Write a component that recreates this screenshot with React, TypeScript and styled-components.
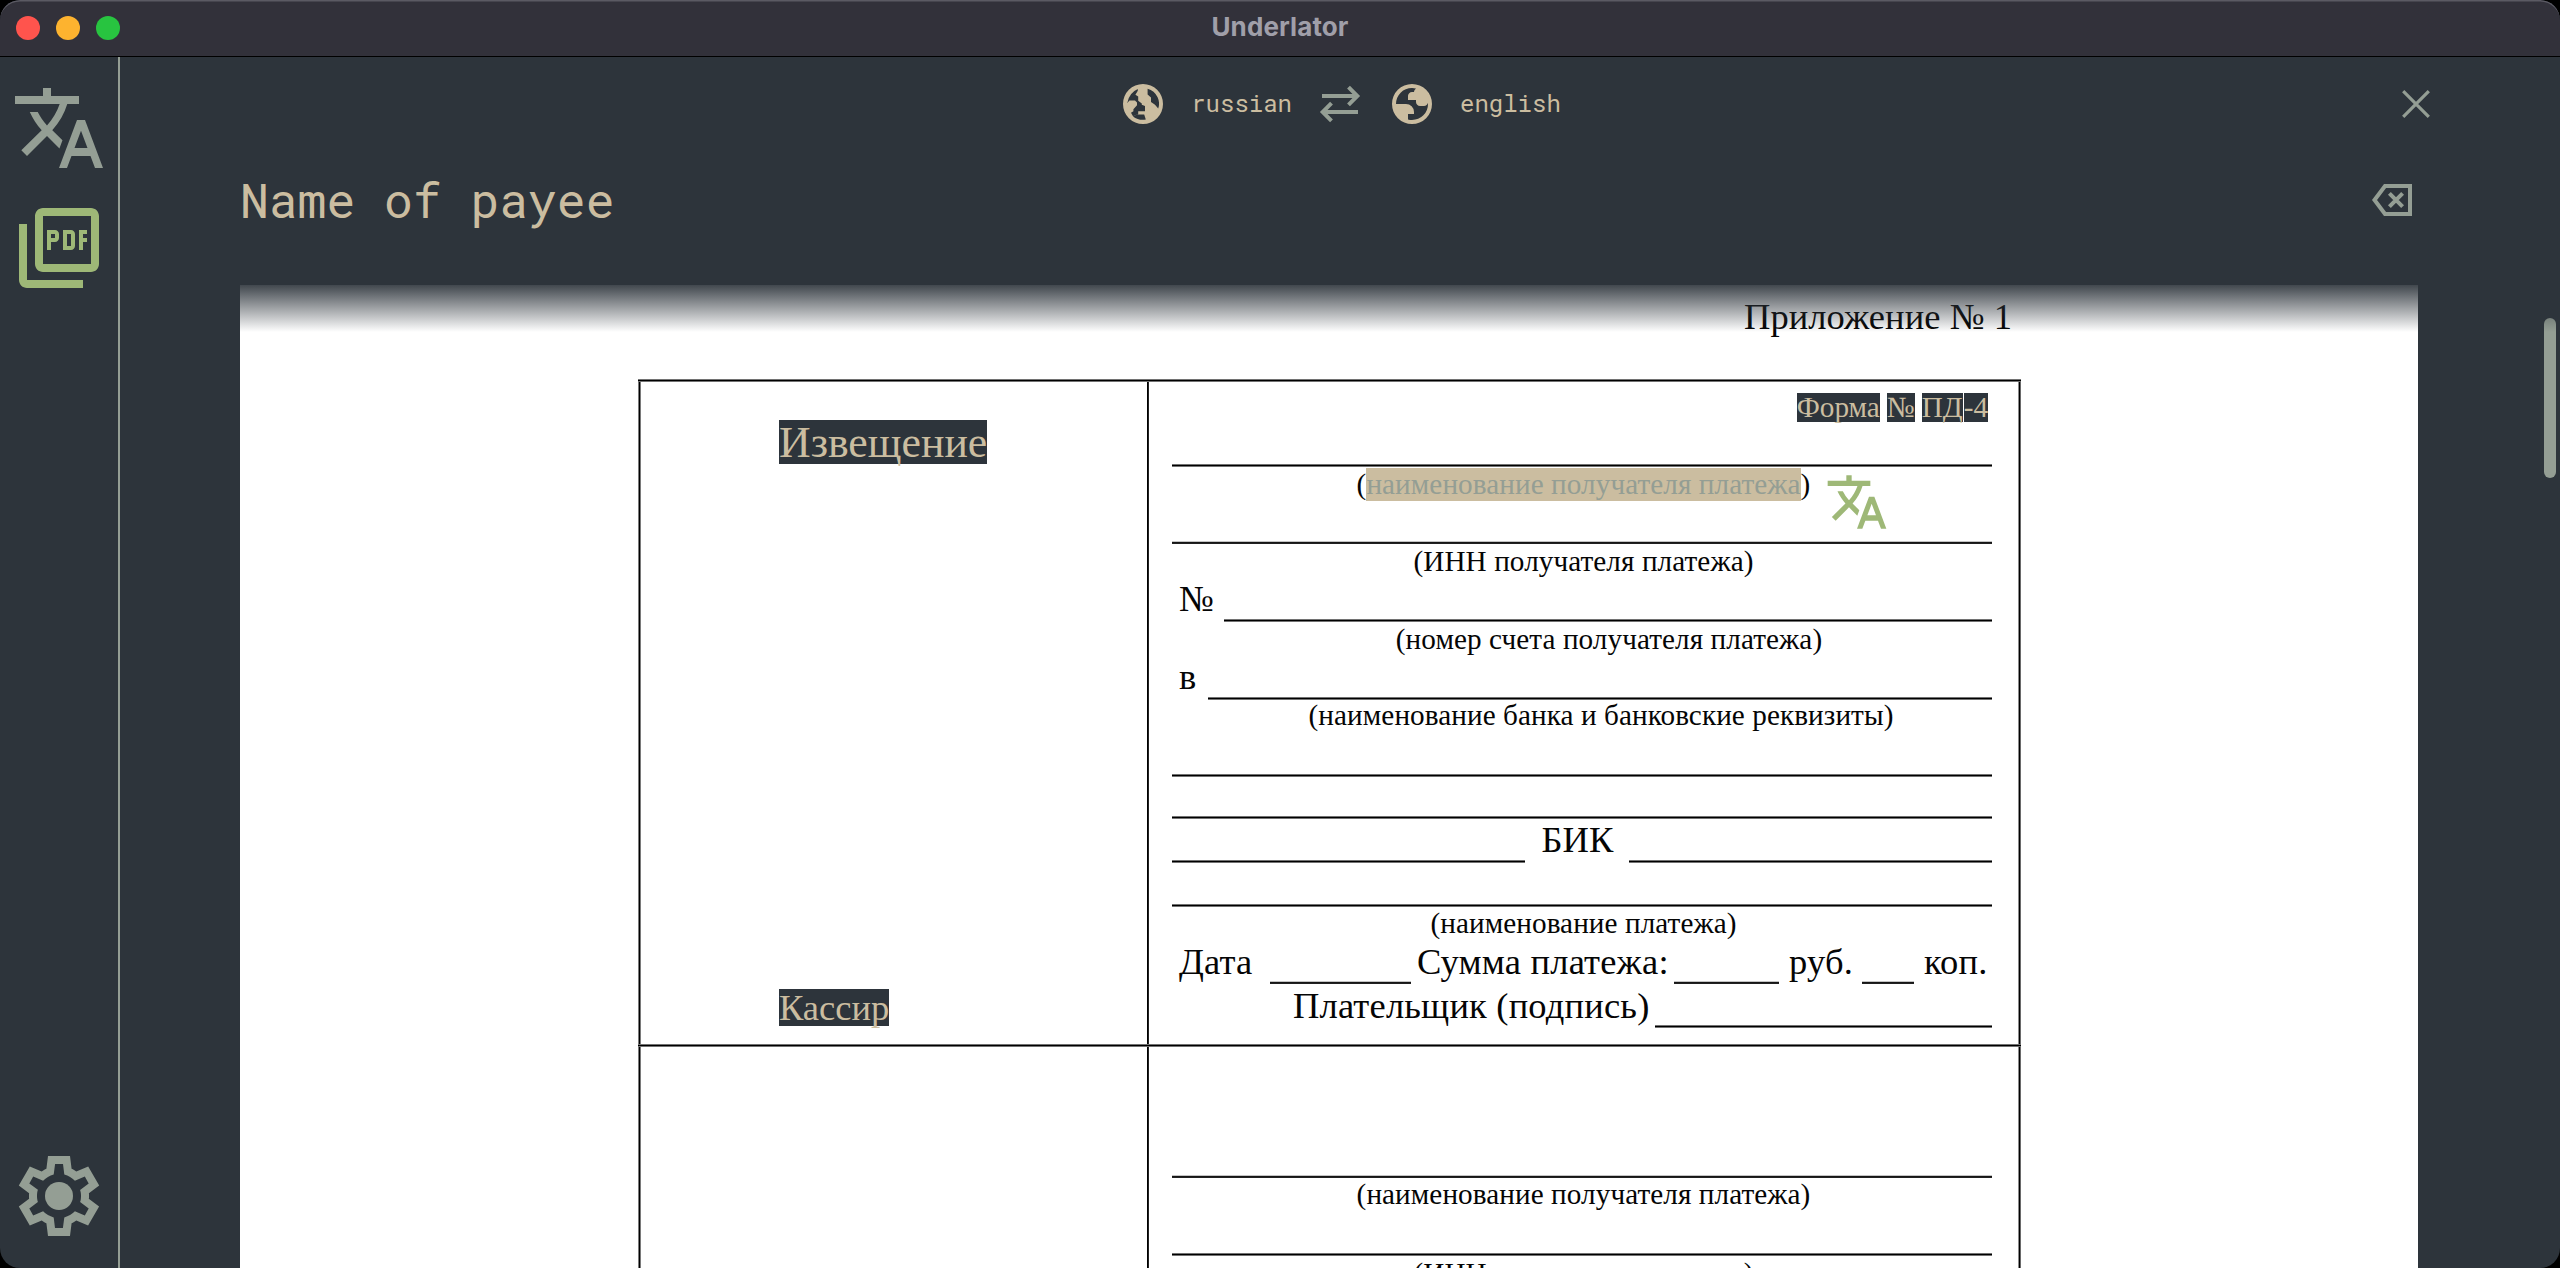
import React from "react";
import styled, { createGlobalStyle, css } from "styled-components";

const color = {
  bg: "#2d343b",
  title: "#32313a",
  cream: "#cbbda0",
  sage: "#949e94",
  green: "#9eb877",
  ink: "#050505",
};

const mono = '"Roboto Mono", "DejaVu Sans Mono", "Liberation Mono", monospace';
const serif = '"Liberation Serif", "Times New Roman", serif';

const GlobalStyle = createGlobalStyle`
  * { box-sizing: border-box; }
  html, body { margin: 0; padding: 0; background: #000; overflow: hidden; }
`;

const Window = styled.div`
  width: 2560px;
  height: 1268px;
  display: flex;
  flex-direction: column;
  overflow: hidden;
  border-radius: 20px;
  background: ${color.bg};
`;

const TitleBar = styled.header`
  position: relative;
  flex: none;
  height: 57px;
  display: flex;
  align-items: center;
  justify-content: center;
  background: ${color.title};
  border-bottom: 1px solid #000;
  border-radius: 20px 20px 0 0;
  box-shadow: inset 0 2px 0 -0.5px #5b5a63;
`;

const Lights = styled.div`
  position: absolute;
  left: 16px;
  top: 16px;
  display: flex;
  gap: 16px;
`;

const Light = styled.span<{ $tone: string }>`
  width: 24px;
  height: 24px;
  border-radius: 50%;
  background: ${(p) => p.$tone};
`;

const Title = styled.h1`
  margin: 0;
  padding-bottom: 2px;
  font: 700 26px/32px Inter, "Liberation Sans", sans-serif;
  letter-spacing: 0.1px;
  color: #a09fa9;
`;

const Body = styled.div`
  flex: 1;
  min-height: 0;
  display: flex;
`;

const Sidebar = styled.nav`
  flex: none;
  width: 120px;
  padding: 23px 0 24px;
  display: flex;
  flex-direction: column;
  align-items: center;
  gap: 24px;
  border-right: 2px solid ${color.sage};
`;

const NavButton = styled.button<{ $active?: boolean; $last?: boolean }>`
  width: 96px;
  height: 96px;
  padding: 0;
  border: 0;
  background: none;
  display: flex;
  color: ${(p) => (p.$active ? color.green : color.sage)};
  ${(p) => p.$last && css`margin-top: auto;`}
`;

const Icon = styled.svg<{ $size: number }>`
  display: block;
  flex: none;
  width: ${(p) => p.$size}px;
  height: ${(p) => p.$size}px;
  fill: currentColor;
`;

const Main = styled.main`
  position: relative;
  flex: 1;
  min-width: 0;
  display: flex;
  flex-direction: column;
`;

const LanguageBar = styled.div`
  flex: none;
  height: 94px;
  display: grid;
  grid-template-columns: 1fr auto 1fr;
  align-items: center;
`;

const Languages = styled.div`
  grid-column: 2;
  display: flex;
  align-items: center;
  gap: 24px;
  color: ${color.cream};
`;

const Language = styled.span`
  padding-bottom: 2px;
  font: 400 24px/46px ${mono};
`;

const IconButton = styled.button<{ $end?: number }>`
  padding: 0;
  border: 0;
  background: none;
  color: ${color.sage};
  ${(p) => p.$end !== undefined && css`justify-self: end; margin-right: ${p.$end}px;`}
`;

const Translation = styled.div`
  flex: none;
  height: 134px;
  padding: 25px 144px 0 120px;
  display: flex;
  justify-content: space-between;
  align-items: flex-start;
`;

const Phrase = styled.p`
  margin: 0;
  font: 400 48px/47px ${mono};
  color: ${color.cream};
`;

const Viewer = styled.section`
  flex: 1;
  min-height: 0;
  display: flex;
  justify-content: space-between;
  padding: 0 4px 0 120px;
`;

const Page = styled.article`
  width: 2178px;
  overflow: hidden;
  background: #fff;
  color: ${color.ink};
  font-family: ${serif};
  font-size: 36.5px;
`;

const Fade = styled.div`
  position: absolute;
  left: 0;
  right: 0;
  top: 223px;
  height: 52px;
  background: linear-gradient(${color.bg}, rgba(45, 48, 50, 0));
  z-index: 2;
`;

const ScrollThumb = styled.div`
  flex: none;
  width: 12px;
  height: 160px;
  margin-top: 33px;
  border-radius: 6px;
  background: ${color.sage};
`;

const Appendix = styled.div`
  height: 94px;
  line-height: 64px;
  padding-right: 406px;
  text-align: right;
  letter-spacing: 0.05px;
`;

const FormTable = styled.div`
  width: 1383px;
  margin-left: 398px;
`;

const Rule = styled.div<{ $w?: number; $low?: boolean }>`
  height: 3px;
  flex: ${(p) => (p.$w ? `0 0 ${p.$w}px` : "1 0 auto")};
  align-self: ${(p) => (p.$w ? "flex-end" : "auto")};
  background: ${(p) =>
    p.$low
      ? "linear-gradient(#c4c4c4 1px, #161616 1px 2px, #222 2px)"
      : "linear-gradient(#727272 1px, #000 1px 2px, #727272 2px)"};
`;

const FullRule = styled(Rule)`
  flex: none;
`;

const Side = styled.div<{ $kind: "left" | "mid" | "right" }>`
  flex: none;
  width: ${(p) => (p.$kind === "mid" ? 2 : 3)}px;
  background: ${(p) =>
    ({
      left: "linear-gradient(90deg, #7a7a7a 1px, #000 1px 2px, #7a7a7a 2px)",
      mid: "linear-gradient(90deg, #000 1px, #222 1px)",
      right: "linear-gradient(90deg, #8a8a8a 1px, #000 1px 2px, #6a6a6a 2px)",
    })[p.$kind]};
`;

const TableRow = styled.div<{ $h: number }>`
  display: flex;
  height: ${(p) => p.$h}px;
`;

const StubCell = styled.div`
  width: 506px;
  padding: 38px 0 18px 138px;
  display: flex;
  flex-direction: column;
  justify-content: space-between;
  align-items: flex-start;
`;

const FieldCell = styled.div`
  width: 869px;
  padding: 0 26px 0 23px;
  display: flex;
  flex-direction: column;
`;

const Mark = styled.span<{ $size: number; $lh: number }>`
  background: ${color.bg};
  color: ${color.cream};
  font-size: ${(p) => p.$size}px;
  line-height: ${(p) => p.$lh}px;
  white-space: nowrap;
`;

const FormTag = styled.div`
  height: 82px;
  padding: 11px 4px 0 0;
  display: flex;
  justify-content: flex-end;
  align-items: flex-start;
`;

const TagSpace = styled.span<{ $w: number }>`
  width: ${(p) => p.$w}px;
`;

const Caption = styled.div<{ $lh: number; $after?: number; $indent?: number }>`
  position: relative;
  flex: none;
  display: flex;
  justify-content: center;
  padding-left: ${(p) => p.$indent ?? 3}px;
  font-size: 29.2px;
  letter-spacing: 0.08px;
  line-height: ${(p) => p.$lh}px;
  margin-bottom: ${(p) => p.$after ?? 0}px;
  white-space: nowrap;
`;

const Selected = styled.span`
  background: ${color.cream};
  color: ${color.sage};
  height: 33px;
  margin-top: 1px;
  line-height: 32px;
`;

const FloatingTranslate = styled.button`
  position: absolute;
  left: 653px;
  top: 3px;
  padding: 0;
  border: 0;
  background: none;
  color: ${color.green};
`;

const Line = styled.div<{ $h: number }>`
  flex: none;
  height: ${(p) => p.$h}px;
  display: flex;
`;

const Label = styled.span<{ $w: number; $pad?: number; $lh: number; $center?: boolean }>`
  flex: none;
  width: ${(p) => p.$w}px;
  padding-left: ${(p) => p.$pad ?? 0}px;
  line-height: ${(p) => p.$lh}px;
  letter-spacing: 0.18px;
  text-align: ${(p) => (p.$center ? "center" : "left")};
  white-space: nowrap;
`;

const Gap = styled.div<{ $h: number }>`
  flex: none;
  height: ${(p) => p.$h}px;
`;

const TranslateIcon = ({ size }: { size: number }) => (
  <Icon $size={size} viewBox="0 0 24 24">
    <path d="M12.87 15.07l-2.54-2.51.03-.03c1.74-1.94 2.98-4.17 3.71-6.53H17V4h-7V2H8v2H1v1.99h11.17C11.5 7.92 10.44 9.75 9 11.35 8.07 10.32 7.3 9.19 6.69 8h-2c.73 1.63 1.73 3.17 2.98 4.56l-5.09 5.02L4 19l5-5 3.11 3.11.76-2.04zM18.5 10h-2L12 22h2l1.12-3h4.75L21 22h2l-4.5-12zm-2.62 7l1.62-4.33L19.12 17h-3.24z" />
  </Icon>
);

const PdfIcon = () => (
  <Icon $size={96} viewBox="0 0 24 24">
    <path d="M20 2H8c-1.1 0-2 .9-2 2v12c0 1.1.9 2 2 2h12c1.1 0 2-.9 2-2V4c0-1.1-.9-2-2-2zm0 14H8V4h12v12zM4 6H2v14c0 1.1.9 2 2 2h14v-2H4V6z" />
    <path d="M16 11.5v-3c0-.55-.45-1-1-1h-2v5h2c.55 0 1-.45 1-1zm-2-3h1v3h-1v-3zm4 2h1v-1h-1v-1h1v-1h-2v5h1zm-8 0h1c.55 0 1-.45 1-1v-1c0-.55-.45-1-1-1H9v5h1v-2zm0-2h1v1h-1v-1z" />
  </Icon>
);

const GearIcon = () => (
  <Icon $size={96} viewBox="0 0 24 24">
    <path
      fillRule="evenodd"
      d="m9.25 22-.4-3.2q-.325-.125-.612-.3-.288-.175-.563-.375L4.7 19.375l-2.75-4.75 2.575-1.95Q4.5 12.5 4.5 12.338v-.675q0-.163.025-.338L1.95 9.375l2.75-4.75 2.975 1.25q.275-.2.575-.375.3-.175.6-.3l.4-3.2h5.5l.4 3.2q.325.125.613.3.287.175.562.375l2.975-1.25 2.75 4.75-2.575 1.95q.025.175.025.338v.674q0 .163-.05.338l2.575 1.95-2.75 4.75-2.95-1.25q-.275.2-.575.375-.3.175-.6.3l-.4 3.2ZM11 20h1.975l.35-2.65q.775-.2 1.438-.587.662-.388 1.212-.938l2.475 1.025.975-1.7-2.15-1.625q.125-.35.175-.738.05-.387.05-.787t-.05-.788q-.05-.387-.175-.737l2.15-1.625-.975-1.7-2.475 1.05q-.55-.575-1.212-.963-.663-.387-1.438-.587L13 4h-1.975l-.35 2.65q-.775.2-1.437.587-.663.388-1.213.938L5.55 7.15l-.975 1.7 2.15 1.6q-.125.375-.175.75-.05.375-.05.8 0 .4.05.775t.175.75l-2.15 1.625.975 1.7 2.475-1.05q.55.575 1.213.963.662.387 1.437.587Z"
    />
    <circle cx="12" cy="12" r="3.5" />
  </Icon>
);

const GlobeEastIcon = () => (
  <Icon $size={48} viewBox="0 0 24 24">
    <path
      fillRule="evenodd"
      d="M12 2a10 10 0 1 0 0 20 10 10 0 0 0 0-20ZM4.1 11.6 5.2 10.2H8L9 11.2V12.6L7.2 14.6V15.6L6 16.4 7 18.1 9 17.2H12.6L13.4 19.8Q9.8 20.4 7 18.2L9.6 17V15.6H13V13L11.4 12.4V11.8L9.6 10.4V8.2L8.2 7.4 9.4 5.4V4.5Q5 6.4 4.1 11.6ZM14.3 4.4V7.2L16 8.8V11L18 12.4 19.6 14.2Q20.6 11.4 19.3 8.6 17.7 5.4 14.3 4.4Z"
    />
  </Icon>
);

const GlobeWestIcon = () => (
  <Icon $size={48} viewBox="0 0 24 24">
    <path
      fillRule="evenodd"
      d="M12 2a10 10 0 1 0 0 20 10 10 0 0 0 0-20ZM12 20q3.35 0 5.675-2.325T20 12q0-.175-.012-.363-.013-.187-.013-.312-.125.725-.675 1.2-.55.475-1.3.475h-2q-.825 0-1.413-.588Q14 11.825 14 11v-1h-4V8q0-.825.588-1.413Q11.175 6 12 6h1q0-.575.313-1.013.312-.437.762-.712-.5-.125-1.012-.2Q12.55 4 12 4 8.65 4 6.325 6.325 4 8.65 4 12h5q1.65 0 2.825 1.175Q13 14.35 13 16v1h-3v2.75q.5.125.988.188Q11.475 20 12 20Z"
    />
  </Icon>
);

const StrokeIcon = ({ d, width }: { d: string; width: number }) => (
  <Icon $size={48} viewBox="0 0 48 48">
    <path d={d} fill="none" stroke="currentColor" strokeWidth={width} />
  </Icon>
);

export default function App() {
  return (
    <>
      <GlobalStyle />
      <Window>
        <TitleBar>
          <Lights>
            <Light $tone="#ff544d" />
            <Light $tone="#fdb32f" />
            <Light $tone="#28c440" />
          </Lights>
          <Title>Underlator</Title>
        </TitleBar>
        <Body>
          <Sidebar>
            <NavButton aria-label="Translate"><TranslateIcon size={96} /></NavButton>
            <NavButton $active aria-label="PDF"><PdfIcon /></NavButton>
            <NavButton $last aria-label="Settings"><GearIcon /></NavButton>
          </Sidebar>
          <Main>
            <LanguageBar>
              <Languages>
                <GlobeEastIcon />
                <Language>russian</Language>
                <IconButton aria-label="Swap">
                  <StrokeIcon width={4} d="M6 16H41M32.5 7.2 41.3 16 32.5 24.8M42 32H7M15.5 23.2 6.7 32 15.5 40.8" />
                </IconButton>
                <GlobeWestIcon />
                <Language>english</Language>
              </Languages>
              <IconButton $end={120} aria-label="Close">
                <StrokeIcon width={3.2} d="M11.2 11.2 36.8 36.8M36.8 11.2 11.2 36.8" />
              </IconButton>
            </LanguageBar>
            <Translation>
              <Phrase>Name of payee</Phrase>
              <IconButton aria-label="Clear">
                <StrokeIcon width={4} d="M6.5 24 17 10H42V38H17ZM21.4 17.4 34.6 30.6M34.6 17.4 21.4 30.6" />
              </IconButton>
            </Translation>
            <Viewer>
              <Page>
                <Appendix>Приложение № 1</Appendix>
                <FormTable>
                  <FullRule />
                  <TableRow $h={662}>
                    <Side $kind="left" />
                    <StubCell>
                      <Mark $size={43.8} $lh={44}>Извещение</Mark>
                      <Mark $size={36.5} $lh={37}>Кассир</Mark>
                    </StubCell>
                    <Side $kind="mid" />
                    <FieldCell>
                      <FormTag>
                        <Mark $size={29.2} $lh={29}>Форма</Mark>
                        <TagSpace $w={7} />
                        <Mark $size={29.2} $lh={29}>№</Mark>
                        <TagSpace $w={7} />
                        <Mark $size={29.2} $lh={29}>ПД</Mark>
                        <TagSpace $w={1} />
                        <Mark $size={29.2} $lh={29}>-4</Mark>
                      </FormTag>
                      <FullRule />
                      <Caption $lh={34} $after={40}>
                        (<Selected>наименование получателя платежа</Selected>)
                        <FloatingTranslate aria-label="Translate selection">
                          <TranslateIcon size={64} />
                        </FloatingTranslate>
                      </Caption>
                      <FullRule $low />
                      <Caption $lh={34}>(ИНН получателя платежа)</Caption>
                      <Line $h={44}>
                        <Label $w={52} $pad={7} $lh={42}>№</Label>
                        <Rule $w={768} />
                      </Line>
                      <Caption $lh={34} $indent={54}>(номер счета получателя платежа)</Caption>
                      <Line $h={44}>
                        <Label $w={36} $pad={7} $lh={42}>в</Label>
                        <Rule $w={784} />
                      </Line>
                      <Caption $lh={31} $after={43} $indent={38}>(наименование банка и банковские реквизиты)</Caption>
                      <FullRule />
                      <Gap $h={39} />
                      <FullRule />
                      <Line $h={44}>
                        <Rule $w={353} />
                        <Label $w={104} $pad={1} $lh={41} $center>БИК</Label>
                        <Rule $w={363} />
                      </Line>
                      <Gap $h={41} />
                      <FullRule />
                      <Caption $lh={32}>(наименование платежа)</Caption>
                      <Line $h={45}>
                        <Label $w={98} $pad={7} $lh={45}>Дата</Label>
                        <Rule $w={141} $low />
                        <Label $w={263} $pad={6} $lh={45}>Сумма платежа:</Label>
                        <Rule $w={105} $low />
                        <Label $w={83} $pad={10} $lh={45}>руб.</Label>
                        <Rule $w={52} $low />
                        <Label $w={78} $pad={10} $lh={45}>коп.</Label>
                      </Line>
                      <Line $h={44}>
                        <Label $w={483} $pad={121} $lh={43}>Плательщик (подпись)</Label>
                        <Rule $w={337} />
                      </Line>
                    </FieldCell>
                    <Side $kind="right" />
                  </TableRow>
                  <FullRule />
                  <TableRow $h={400}>
                    <Side $kind="left" />
                    <StubCell />
                    <Side $kind="mid" />
                    <FieldCell>
                      <Gap $h={128} />
                      <FullRule $low />
                      <Caption $lh={33} $after={42}>(наименование получателя платежа)</Caption>
                      <FullRule />
                      <Caption $lh={34}>(ИНН получателя платежа)</Caption>
                    </FieldCell>
                    <Side $kind="right" />
                  </TableRow>
                </FormTable>
              </Page>
              <ScrollThumb />
            </Viewer>
            <Fade />
          </Main>
        </Body>
      </Window>
    </>
  );
}
